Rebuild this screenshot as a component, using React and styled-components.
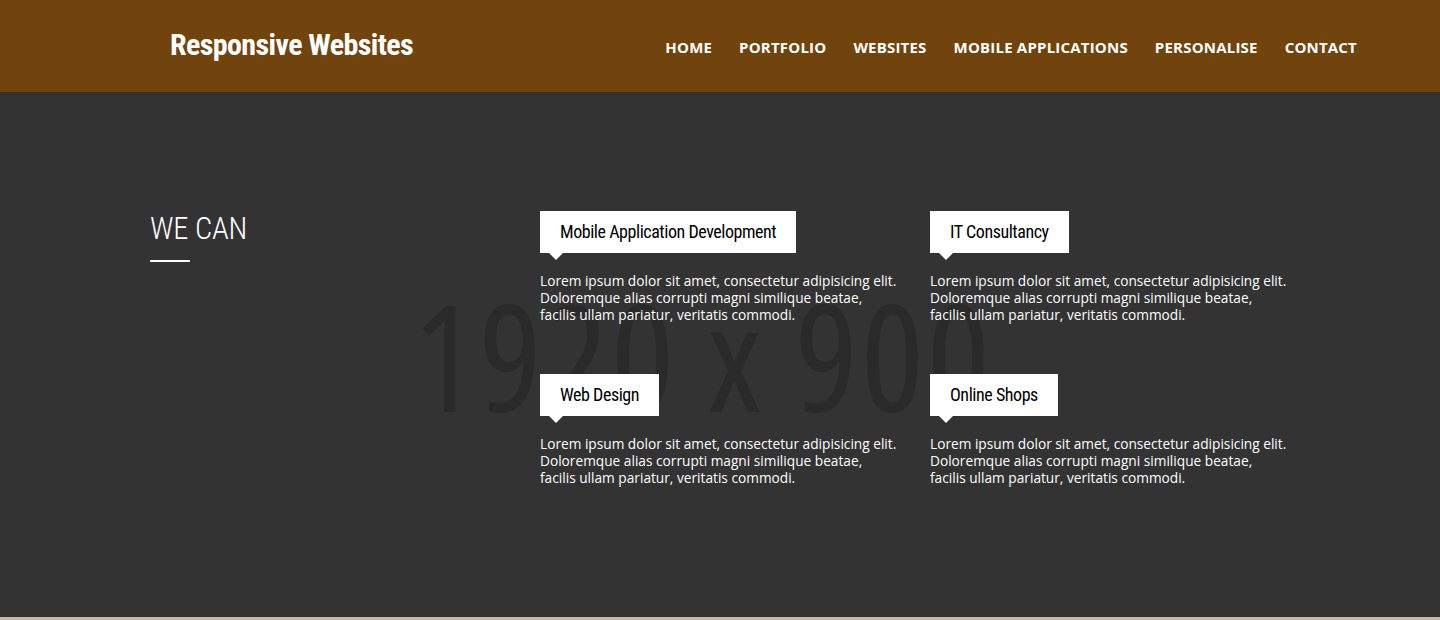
import React from "react";
import styled, { createGlobalStyle } from "styled-components";

const Global = createGlobalStyle`
  html, body { margin: 0; padding: 0; }
  body { background: #d0b8a0; font-family: "Open Sans", "Liberation Sans", sans-serif; }
  * { box-sizing: border-box; }
`;

const Condensed = `"Roboto Condensed", "Open Sans", "Liberation Sans", sans-serif`;

const Header = styled.header`
  height: 92px;
  background: #71430d;
  display: flex;
  align-items: center;
  justify-content: space-between;
  padding: 0 83px 0 170px;
`;

const Logo = styled.a`
  font-family: ${Condensed};
  font-stretch: 75%;
  font-size: 30px;
  font-weight: 700;
  color: #fff;
  letter-spacing: -0.6px;
  text-decoration: none;
  margin-top: -3px;
`;

const Nav = styled.nav`
  display: flex;
  gap: 27px;
`;

const NavLink = styled.a`
  font-family: "Open Sans", sans-serif;
  font-weight: 700;
  font-size: 15px;
  letter-spacing: 0.2px;
  color: #fff;
  text-decoration: none;
  text-transform: uppercase;
  margin-top: 2px;
`;

const Section = styled.section`
  height: 525px;
  background: #333333;
  display: grid;
  overflow: hidden;
`;

const Watermark = styled.div`
  grid-area: 1 / 1;
  align-self: center;
  justify-self: center;
  font-family: "Open Sans", "Liberation Sans", sans-serif;
  font-stretch: 75%;
  font-size: 148px;
  letter-spacing: 3px;
  color: #2a2a2a;
  line-height: 1;
  margin: 0 34px 0 0;
  white-space: nowrap;
  user-select: none;
`;

const Container = styled.div`
  grid-area: 1 / 1;
  width: 1140px;
  margin: 0 auto;
  padding-top: 119px;
  display: grid;
  grid-template-columns: 390px 1fr;
  align-items: start;
  position: relative;
`;

const Heading = styled.div`
  display: flex;
  flex-direction: column;
  gap: 13px;
`;

const HeadingText = styled.h2`
  margin: 0;
  font-family: ${Condensed};
  font-stretch: 75%;
  font-weight: 300;
  font-size: 30.5px;
  line-height: 36px;
  color: #fff;
  letter-spacing: -0.2px;
`;

const Underline = styled.span`
  display: block;
  width: 40px;
  height: 2px;
  background: #fff;
`;

const Services = styled.div`
  display: grid;
  grid-template-columns: 360px 360px;
  column-gap: 30px;
  row-gap: 51px;
`;

const Service = styled.div`
  display: flex;
  flex-direction: column;
  align-items: flex-start;
`;

const Tag = styled.h3`
  position: relative;
  margin: 0 0 19px;
  background: #fff;
  color: #000;
  height: 42px;
  line-height: 42px;
  padding: 0 20px;
  font-family: ${Condensed};
  font-stretch: 75%;
  font-weight: 400;
  font-size: 18px;
  letter-spacing: -0.45px;
  &::after {
    content: "";
    position: absolute;
    left: 9px;
    top: 42px;
    border-left: 7px solid transparent;
    border-right: 7px solid transparent;
    border-top: 7px solid #fff;
  }
`;

const Text = styled.p`
  margin: 0;
  font-size: 13.7px;
  line-height: 17px;
  color: #fff;
  font-family: "Open Sans", sans-serif;
  font-weight: 500;
`;

const navItems = ["Home", "Portfolio", "Websites", "Mobile Applications", "Personalise", "Contact"];
const services = ["Mobile Application Development", "IT Consultancy", "Web Design", "Online Shops"];

export default function App() {
  return (
    <>
      <Global />
      <Header>
        <Logo href="#">Responsive Websites</Logo>
        <Nav>
          {navItems.map((n) => (
            <NavLink key={n} href="#">{n}</NavLink>
          ))}
        </Nav>
      </Header>
      <Section>
        <Watermark>1920 x 900</Watermark>
        <Container>
          <Heading>
            <HeadingText>WE CAN</HeadingText>
            <Underline />
          </Heading>
          <Services>
            {services.map((s) => (
              <Service key={s}>
                <Tag>{s}</Tag>
                <Text>
                  Lorem ipsum dolor sit amet, consectetur adipisicing elit.<br />
                  Doloremque alias corrupti magni similique beatae,<br />
                  facilis ullam pariatur, veritatis commodi.
                </Text>
              </Service>
            ))}
          </Services>
        </Container>
      </Section>
    </>
  );
}
